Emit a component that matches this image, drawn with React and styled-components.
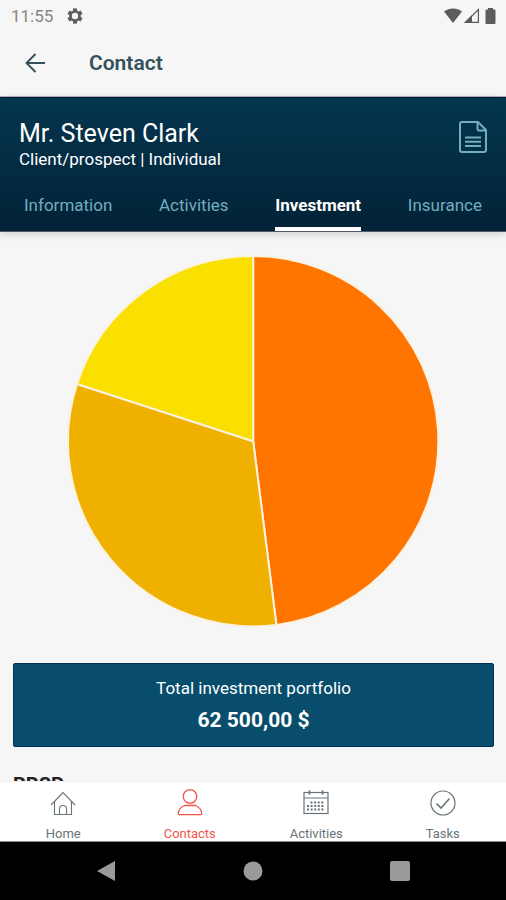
import styled, { createGlobalStyle } from 'styled-components';

const GlobalStyle = createGlobalStyle`
    * {
        box-sizing: border-box;
    }
    body {
        margin: 0;
        background: #f6f6f6;
        font-family: Roboto, "Liberation Sans", sans-serif;
    }
    button {
        display: flex;
        padding: 0;
        border: none;
        background: none;
        color: inherit;
        font: inherit;
        cursor: pointer;
    }
    a {
        color: inherit;
        text-decoration: none;
    }
    svg {
        display: block;
    }
`;

const Screen = styled.div`
    display: flex;
    flex-direction: column;
    height: 100vh;
    overflow: hidden;
`;

const StatusBar = styled.div`
    display: flex;
    align-items: center;
    height: 32px;
    padding: 0 8px 0 11px;
    color: #5c5c5c;
`;

const Clock = styled.time`
    margin-right: 14px;
    color: #858585;
    font-size: 17px;
    line-height: 20px;
`;

const StatusIcons = styled.div`
    display: flex;
    align-items: center;
    gap: 2px;
    margin-left: auto;
`;

const AppBar = styled.header`
    display: flex;
    align-items: center;
    gap: 40px;
    height: 65px;
    padding: 0 21px 2px;
    border-bottom: 1px solid #b5b3bd;
    color: #34505a;
`;

const AppTitle = styled.h1`
    margin: 0;
    font-size: 21px;
    font-weight: 600;
    line-height: 24px;
`;

const Client = styled.section`
    position: relative;
    padding-top: 22px;
    background: linear-gradient(#04364f, #022236);
    border-top: 1px solid #001c3c;
    border-bottom: 1px solid #4c5a68;
    box-shadow: 0 2px 8px rgba(0, 0, 0, 0.16);
    color: white;
`;

const ClientRow = styled.div`
    display: flex;
    justify-content: space-between;
    padding: 0 18px 0 19px;
`;

const ClientName = styled.h2`
    margin: 0;
    font-size: 25px;
    font-weight: 400;
    line-height: 27px;
`;

const ClientType = styled.p`
    margin: 0;
    font-size: 17px;
    line-height: 24px;
`;

const Tabs = styled.nav`
    display: flex;
    justify-content: space-between;
    padding: 20px 24px 0;
`;

const Tab = styled.button`
    height: 40px;
    padding-top: 3px;
    border-bottom: 4px solid ${(props) => (props.$active ? 'white' : 'transparent')};
    color: ${(props) => (props.$active ? 'white' : '#72adc0')};
    font-size: 17px;
    font-weight: ${(props) => (props.$active ? 700 : 400)};
    line-height: 22px;
`;

const Content = styled.main`
    flex: 1;
    min-height: 0;
    overflow: hidden;
    padding: 24px 12px 0 13px;
`;

const Chart = styled.svg`
    width: 77%;
    height: auto;
    margin: 0 auto 37px;
`;

const Total = styled.section`
    display: flex;
    flex-direction: column;
    align-items: center;
    gap: 8px;
    padding: 13px 12px;
    border: 1px solid #002f58;
    border-radius: 2px;
    background: #084d6c;
    color: white;
`;

const TotalLabel = styled.span`
    font-size: 17px;
    line-height: 22px;
`;

const TotalValue = styled.strong`
    font-size: 21px;
    font-weight: 700;
    line-height: 26px;
`;

const AccountTitle = styled.h3`
    margin: 24px 0 0;
    color: #222;
    font-size: 20px;
    font-weight: 700;
    line-height: 28px;
`;

const BottomNav = styled.nav`
    display: grid;
    grid-template-columns: repeat(4, 1fr);
    height: 61px;
    border-top: 1px solid #eeeeee;
    border-bottom: 1px solid #888888;
    background: white;
`;

const NavLink = styled.a`
    display: flex;
    flex-direction: column;
    align-items: center;
    gap: 6px;
    padding-top: 7px;
    color: ${(props) => (props.$active ? '#f0554a' : '#68747a')};
    font-size: 13px;
    line-height: 18px;
`;

const SystemBar = styled.div`
    display: flex;
    justify-content: space-around;
    align-items: center;
    height: 58px;
    padding: 0 33px;
    background: black;
    color: #9a9a9a;
`;

const slices = [
    { name: 'Orange', value: 48, color: '#ff7500' },
    { name: 'Amber', value: 32, color: '#efb000' },
    { name: 'Yellow', value: 20, color: '#fae000' },
];

const tabs = ['Information', 'Activities', 'Investment', 'Insurance'];

const links = [
    { label: 'Home', icon: HomeIcon },
    { label: 'Contacts', icon: PersonIcon },
    { label: 'Activities', icon: CalendarIcon },
    { label: 'Tasks', icon: CheckIcon },
];

function GearIcon() {
    return (
        <svg width="16" height="16" viewBox="0 0 16 16" fill="none" stroke="currentColor">
            <circle cx="8" cy="8" r="4.500" strokeWidth="2.600" />
            {[0, 60, 120, 180, 240, 300].map((angle) => (
                <path key={angle} d="M8 .4v2.800" strokeWidth="4" transform={`rotate(${angle} 8 8)`} />
            ))}
        </svg>
    );
}

function WifiIcon() {
    return (
        <svg width="18" height="16" viewBox="0 0 18 16" fill="currentColor">
            <path d="M0 3.500C5-.6 13-.6 18 3.500L9 15z" />
        </svg>
    );
}

function SignalIcon() {
    return (
        <svg width="16" height="16" viewBox="0 0 16 16">
            <path d="M1.500 14.400L14.400 1.500v12.900z" fill="none" stroke="currentColor" strokeWidth="1.200" />
            <path d="M0 15L8 7v8z" fill="currentColor" />
        </svg>
    );
}

function BatteryIcon() {
    return (
        <svg width="16" height="16" viewBox="0 0 16 16" fill="currentColor">
            <path d="M6 0h5v1.600h1.500a1 1 0 0 1 1 1V15a1 1 0 0 1-1 1h-8a1 1 0 0 1-1-1V2.600a1 1 0 0 1 1-1H6z" />
        </svg>
    );
}

function BackIcon() {
    return (
        <svg width="28" height="28" viewBox="0 0 28 28" fill="none" stroke="currentColor" strokeWidth="1.900">
            <path d="M24 14H6M14.500 5L5.500 14l9 9" />
        </svg>
    );
}

function DocumentIcon() {
    return (
        <svg width="30" height="34" viewBox="0 0 30 34" fill="none" stroke="#72adc0" strokeWidth="2" strokeLinejoin="round">
            <path d="M4 2h16l8 8v20a2 2 0 0 1-2 2H4a2 2 0 0 1-2-2V4a2 2 0 0 1 2-2z" />
            <path d="M19.500 2v7a1.500 1.500 0 0 0 1.500 1.500h7" />
            <path d="M7 17.500h16M7 21.800h16M7 26h16" />
        </svg>
    );
}

function HomeIcon() {
    return (
        <svg width="28" height="30" viewBox="0 0 28 30" fill="none" stroke="currentColor" strokeWidth="1.100">
            <path d="M2 16L14 3.500 26 16" />
            <path d="M5.500 12.500v13h17v-13" />
            <path d="M10.500 25.500V20a3.500 3.500 0 0 1 7 0v5.500" />
        </svg>
    );
}

function PersonIcon() {
    return (
        <svg width="28" height="30" viewBox="0 0 28 30" fill="none" stroke="currentColor" strokeWidth="1.300">
            <circle cx="14" cy="7.500" r="6.800" />
            <path d="M8.500 16.500h11c3.500 1.500 6 4.500 6.200 8 0 .7-.5 1.200-1.200 1.200h-21c-.7 0-1.200-.5-1.200-1.200.2-3.500 2.700-6.500 6.200-8z" />
        </svg>
    );
}

function CalendarIcon() {
    return (
        <svg width="28" height="30" viewBox="0 0 28 30" fill="none" stroke="currentColor">
            <rect x="2" y="3.500" width="24" height="21" strokeWidth="1.200" />
            <path d="M2 9h24" />
            <path d="M7.500 1.500v4M20.500 1.500v4" strokeWidth="1.800" />
            <path d="M8.500 13.500h14M5 17h18M5 20.500h18" strokeWidth="2" strokeDasharray="2 1.600" />
        </svg>
    );
}

function CheckIcon() {
    return (
        <svg width="28" height="30" viewBox="0 0 28 30" fill="none" stroke="currentColor" strokeWidth="1.200">
            <circle cx="14" cy="14" r="12" />
            <path d="M7.500 14.500l4.500 4.500 8.500-9.500" strokeWidth="1.600" />
        </svg>
    );
}

function PieChart() {
    const r = 185;
    const point = (share) => {
        const angle = (share / 100) * 2 * Math.PI;
        return `${185 + r * Math.sin(angle)} ${185 - r * Math.cos(angle)}`;
    };
    let start = 0;

    return (
        <Chart viewBox="0 0 370 370" overflow="visible" role="img" aria-label="Investment portfolio by account">
            {slices.map(({ name, value, color }) => {
                const from = start;
                start += value;
                return (
                    <path
                        key={name}
                        d={`M185 185L${point(from)}A${r} ${r} 0 0 1 ${point(start)}z`}
                        fill={color}
                        stroke="#fbf1df"
                        strokeWidth="2"
                        strokeLinejoin="round"
                    />
                );
            })}
        </Chart>
    );
}

function App() {
    return (
        <Screen>
            <GlobalStyle />
            <StatusBar>
                <Clock>11:55</Clock>
                <GearIcon />
                <StatusIcons>
                    <WifiIcon />
                    <SignalIcon />
                    <BatteryIcon />
                </StatusIcons>
            </StatusBar>

            <AppBar>
                <button aria-label="Back"><BackIcon /></button>
                <AppTitle>Contact</AppTitle>
            </AppBar>

            <Client>
                <ClientRow>
                    <div>
                        <ClientName>Mr. Steven Clark</ClientName>
                        <ClientType>Client/prospect | Individual</ClientType>
                    </div>
                    <button aria-label="Notes"><DocumentIcon /></button>
                </ClientRow>
                <Tabs>
                    {tabs.map((tab) => (
                        <Tab key={tab} $active={tab === 'Investment'}>{tab}</Tab>
                    ))}
                </Tabs>
            </Client>

            <Content>
                <PieChart />
                <Total>
                    <TotalLabel>Total investment portfolio</TotalLabel>
                    <TotalValue>62 500,00 $</TotalValue>
                </Total>
                <AccountTitle>RRSP</AccountTitle>
            </Content>

            <BottomNav>
                {links.map(({ label, icon: Icon }) => (
                    <NavLink key={label} href="#" $active={label === 'Contacts'}>
                        <Icon />
                        {label}
                    </NavLink>
                ))}
            </BottomNav>

            <SystemBar>
                <button aria-label="System back">
                    <svg width="20" height="22" viewBox="0 0 20 22" fill="currentColor">
                        <path d="M1 11L19 1v20z" />
                    </svg>
                </button>
                <button aria-label="System home">
                    <svg width="20" height="20" viewBox="0 0 20 20" fill="currentColor">
                        <circle cx="10" cy="10" r="9.500" />
                    </svg>
                </button>
                <button aria-label="Recent apps">
                    <svg width="20" height="20" viewBox="0 0 20 20" fill="currentColor">
                        <rect width="20" height="20" rx="2" />
                    </svg>
                </button>
            </SystemBar>
        </Screen>
    );
}

export default App;
